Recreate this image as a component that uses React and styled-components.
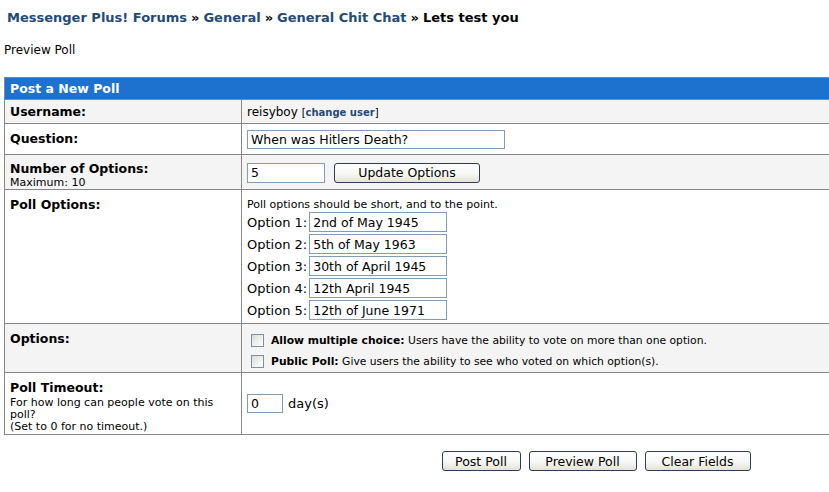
import React from "react";
import styled, { createGlobalStyle } from "styled-components";

const GlobalStyle = createGlobalStyle`
  html, body {
    margin: 0;
    padding: 0;
    background: #ffffff;
    overflow: hidden;
  }
  body {
    font-family: "DejaVu Sans", Verdana, sans-serif;
    color: #000;
  }
`;

const Page = styled.div`
  padding: 8px 4px 0 4px;
  width: 1184px;
`;

const Breadcrumb = styled.div`
  padding-left: 3px;
  font-size: 13px;
  font-weight: bold;
  line-height: 20px;
  white-space: nowrap;
`;

const Crumb = styled.a`
  color: #1f4b78;
  text-decoration: none;
`;

const Sep = styled.span`
  margin: 0 4px;
`;

const PageTitle = styled.div`
  margin-top: 14px;
  font-size: 12px;
  line-height: 16px;
`;

const Table = styled.table`
  margin-top: 19px;
  width: 1184px;
  border-collapse: collapse;
  table-layout: fixed;
  border: 1px solid #888;
`;

const LabelCol = styled.col`
  width: 237px;
`;

const HeadCell = styled.td`
  background: #1d72cf;
  border-top: 1px solid #5f8fc4;
  color: #fff;
  font-size: 12.5px;
  font-weight: bold;
  height: 22px;
  padding: 0 5px;
  box-sizing: border-box;
`;

const Row = styled.tr`
  background: ${(p) => (p.$alt ? "#f4f4f4" : "#ffffff")};
  height: ${(p) => p.$h}px;
`;

const Label = styled.td`
  border: 1px solid #888;
  border-left: none;
  padding: ${(p) => (p.$mid ? "0 5px" : `${p.$top || 7}px 5px 0 5px`)};
  vertical-align: ${(p) => (p.$mid ? "middle" : "top")};
  font-size: 12.5px;
  font-weight: bold;
  line-height: 16px;
`;

const Value = styled.td`
  border: 1px solid #888;
  padding: ${(p) => p.$pad || "0 5px"};
  vertical-align: ${(p) => p.$valign || "middle"};
  font-size: 12px;
`;

const Small = styled.div`
  font-size: 11px;
  font-weight: normal;
  line-height: 12px;
  margin-top: ${(p) => p.$gap || 0}px;
`;

const Link = styled.a`
  color: #1f4b78;
  font-weight: bold;
  text-decoration: none;
`;

const Bracket = styled.span`
  font-size: 10px;
`;

const Input = styled.input`
  box-sizing: border-box;
  width: ${(p) => p.$w}px;
  height: ${(p) => p.$h || 20}px;
  border: 1px solid #7f9db9;
  padding: 0 3px;
  margin: 0;
  font-family: "DejaVu Sans", Verdana, sans-serif;
  font-size: 12.5px;
  color: #000;
  background: #fff;
  vertical-align: middle;
`;

const Inline = styled.div`
  display: flex;
  align-items: center;
  gap: ${(p) => p.$gap || 0}px;
  margin-top: ${(p) => p.$top || 0}px;
`;

const Button = styled.button`
  box-sizing: border-box;
  width: ${(p) => p.$w}px;
  height: 20px;
  padding: 0;
  border: 1px solid #2c3e55;
  border-radius: 3px;
  background: linear-gradient(#ffffff 0%, #f7f7f4 55%, #e4e2d8 100%);
  font-family: "DejaVu Sans", Verdana, sans-serif;
  font-size: 12.5px;
  color: #000;
`;

const OptionList = styled.div`
  display: flex;
  flex-direction: column;
  gap: 2px;
  margin-top: 1px;
`;

const OptionLabel = styled.span`
  font-size: 13px;
  margin-right: 2px;
`;

const CheckRow = styled.label`
  display: flex;
  align-items: center;
  height: 21px;
  font-size: 10.75px;
  white-space: nowrap;
`;

const Check = styled.input.attrs({ type: "checkbox" })`
  appearance: none;
  box-sizing: border-box;
  width: 13px;
  height: 13px;
  margin: 0 7px 0 9px;
  border: 1px solid #7f8fa3;
  background: linear-gradient(135deg, #dcdcd6, #ffffff);
`;

const DayLabel = styled.span`
  font-size: 13px;
`;

const ButtonBar = styled.div`
  display: flex;
  justify-content: center;
  gap: 8px;
  margin-top: 16px;
`;

const options = [
  "2nd of May 1945",
  "5th of May 1963",
  "30th of April 1945",
  "12th April 1945",
  "12th of June 1971",
];

export default function App() {
  return (
    <>
      <GlobalStyle />
      <Page>
        <Breadcrumb>
          <Crumb href="#">Messenger Plus! Forums</Crumb>
          <Sep>»</Sep>
          <Crumb href="#">General</Crumb>
          <Sep>»</Sep>
          <Crumb href="#">General Chit Chat</Crumb>
          <Sep>»</Sep>
          Lets test you
        </Breadcrumb>
        <PageTitle>Preview Poll</PageTitle>
        <Table>
          <colgroup>
            <LabelCol />
            <col />
          </colgroup>
          <tbody>
            <tr>
              <HeadCell colSpan={2}>Post a New Poll</HeadCell>
            </tr>
            <Row $alt $h={24}>
              <Label $mid>Username:</Label>
              <Value>
                reisyboy <Bracket>[<Link href="#">change user</Link>]</Bracket>
              </Value>
            </Row>
            <Row $h={31}>
              <Label $mid>Question:</Label>
              <Value>
                <Inline $top={1}>
                  <Input $w={258} $h={19} defaultValue="When was Hitlers Death?" />
                </Inline>
              </Value>
            </Row>
            <Row $alt $h={35}>
              <Label $top={6}>
                Number of Options:
                <Small>Maximum: 10</Small>
              </Label>
              <Value>
                <Inline $gap={9} $top={1}>
                  <Input $w={78} defaultValue="5" />
                  <Button $w={146}>Update Options</Button>
                </Inline>
              </Value>
            </Row>
            <Row $h={134}>
              <Label>Poll Options:</Label>
              <Value $valign="top" $pad="9px 5px 0 5px">
                <Small>Poll options should be short, and to the point.</Small>
                <OptionList>
                  {options.map((o, i) => (
                    <Inline key={i}>
                      <OptionLabel>Option {i + 1}:</OptionLabel>
                      <Input $w={138} defaultValue={o} />
                    </Inline>
                  ))}
                </OptionList>
              </Value>
            </Row>
            <Row $alt $h={49}>
              <Label>Options:</Label>
              <Value $valign="top" $pad="6px 5px 0 0">
                <CheckRow>
                  <Check />
                  <span>
                    <b>Allow multiple choice:</b> Users have the ability to vote on more than one option.
                  </span>
                </CheckRow>
                <CheckRow>
                  <Check />
                  <span>
                    <b>Public Poll:</b> Give users the ability to see who voted on which option(s).
                  </span>
                </CheckRow>
              </Value>
            </Row>
            <Row $h={62}>
              <Label>
                Poll Timeout:
                <Small $gap={1}>
                  For how long can people vote on this poll?
                  <br />
                  (Set to 0 for no timeout.)
                </Small>
              </Label>
              <Value>
                <Inline $gap={5}>
                  <Input $w={36} $h={19} defaultValue="0" />
                  <DayLabel>day(s)</DayLabel>
                </Inline>
              </Value>
            </Row>
          </tbody>
        </Table>
        <ButtonBar>
          <Button $w={79}>Post Poll</Button>
          <Button $w={108}>Preview Poll</Button>
          <Button $w={106}>Clear Fields</Button>
        </ButtonBar>
      </Page>
    </>
  );
}
